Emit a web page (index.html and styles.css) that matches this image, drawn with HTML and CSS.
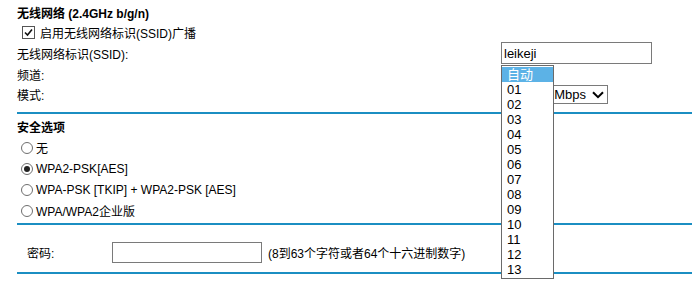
FILE: index.html
```html
<!DOCTYPE html>
<html lang="zh-CN">
<head>
<meta charset="utf-8">
<title>无线设置</title>
<link rel="stylesheet" href="styles.css">
</head>
<body>
<div class="page">
  <section class="wireless">
    <div class="title">无线网络 (2.4GHz b/g/n)</div>
    <label class="check-row">
      <span class="checkbox"><svg width="13" height="13" viewBox="0 0 13 13"><rect x="0.5" y="0.5" width="12" height="12" fill="#fff" stroke="#555"/><polyline points="3,6.5 5.5,9 10,3.5" fill="none" stroke="#111" stroke-width="1.6"/></svg></span>
      启用无线网络标识(SSID)广播
    </label>
    <div class="field ssid-row">
      <span class="label">无线网络标识(SSID):</span>
      <div class="text-input ssid">leikeji</div>
    </div>
    <div class="field channel-row">
      <span class="label">频道:</span>
      <div></div>
    </div>
    <div class="field mode-row">
      <span class="label">模式:</span>
      <div class="select mode"><span class="select-text">Mbps</span><svg class="chev" width="12" height="8" viewBox="0 0 12 8"><polyline points="1,1.2 6,6.2 11,1.2" fill="none" stroke="#000" stroke-width="2"/></svg></div>
    </div>
  </section>
  <div class="rule rule-1"></div>
  <section class="security">
    <div class="title sec-title">安全选项</div>
    <label class="radio-row"><span class="radio"></span>无</label>
    <label class="radio-row"><span class="radio checked"></span>WPA2-PSK[AES]</label>
    <label class="radio-row"><span class="radio"></span>WPA-PSK [TKIP] + WPA2-PSK [AES]</label>
    <label class="radio-row"><span class="radio"></span>WPA/WPA2企业版</label>
  </section>
  <div class="rule rule-2"></div>
  <div class="pass-row">
    <span class="pass-label">密码:</span>
    <div class="text-input pass"></div>
    <span class="hint">(8到63个字符或者64个十六进制数字)</span>
  </div>
  <div class="rule rule-3"></div>
</div>
<ul class="dropdown">
  <li class="selected">自动</li>
  <li>01</li><li>02</li><li>03</li><li>04</li><li>05</li><li>06</li>
  <li>07</li><li>08</li><li>09</li><li>10</li><li>11</li><li>12</li><li>13</li>
</ul>
</body>
</html>
```

FILE: styles.css
```css
html, body {
  margin: 0;
  padding: 0;
  background: #fff;
}
body {
  font-family: "Liberation Sans", Arial, "Noto Sans CJK SC", sans-serif;
  font-size: 12px;
  color: #000;
  overflow: hidden;
}
.page {
  padding-left: 17px;
}
.wireless {
  padding-top: 6px;
}
.title {
  font-weight: bold;
  height: 17px;
  line-height: 17px;
}
.check-row {
  display: flex;
  align-items: center;
  height: 19px;
  padding-left: 5px;
}
.checkbox {
  display: flex;
  width: 13px;
  height: 13px;
  margin-right: 5px;
}
.field {
  display: grid;
  grid-template-columns: 484px auto;
  align-items: center;
}
.ssid-row { height: 22px; }
.channel-row { height: 20px; }
.mode-row { height: 21px; }
.text-input {
  box-sizing: border-box;
  border: 1px solid #7a7a7a;
  background: #fff;
  font-size: 13px;
  display: flex;
  align-items: center;
}
.ssid {
  width: 151px;
  height: 22px;
  padding-left: 2px;
}
.select {
  box-sizing: border-box;
  border: 1px solid #7a7a7a;
  background: #fff;
  display: flex;
  align-items: center;
  justify-content: flex-end;
  font-size: 13px;
}
.mode {
  margin-left: 52px;
  width: 55px;
  height: 19px;
  padding-right: 3px;
  white-space: nowrap;
}
.chev {
  margin-left: 6px;
  flex: none;
}
.rule {
  height: 2px;
  background: #1b8ec2;
}
.rule-1 { margin-top: 7px; }
.sec-title {
  margin-top: 5px;
  height: 18px;
  line-height: 18px;
}
.radio-row {
  display: flex;
  align-items: center;
  height: 21px;
  padding-left: 4px;
}
.radio {
  box-sizing: border-box;
  width: 12px;
  height: 12px;
  border: 1px solid #6f6f6f;
  border-radius: 50%;
  margin-right: 3px;
  display: flex;
  align-items: center;
  justify-content: center;
  background: #fff;
}
.radio.checked::after {
  content: "";
  width: 6px;
  height: 6px;
  border-radius: 50%;
  background: #222;
}
.rule-2 { margin-top: 2px; }
.pass-row {
  display: flex;
  align-items: center;
  margin-top: 17px;
  height: 21px;
}
.pass-label {
  width: 95px;
  box-sizing: border-box;
  padding-left: 10px;
  flex: none;
}
.pass {
  width: 150px;
  height: 21px;
  flex: none;
}
.hint {
  margin-left: 6px;
}
.rule-3 { margin-top: 9px; }
.dropdown {
  position: absolute;
  left: 501px;
  top: 65px;
  width: 53px;
  box-sizing: border-box;
  margin: 0;
  padding: 1px 0;
  list-style: none;
  border: 1px solid #6a6a6a;
  background: #fff;
  font-size: 13px;
}
.dropdown li {
  height: 15px;
  line-height: 15px;
  padding-left: 5px;
  color: #000;
}
.dropdown li.selected {
  background: #5cb2e6;
  color: #fff;
}
```
